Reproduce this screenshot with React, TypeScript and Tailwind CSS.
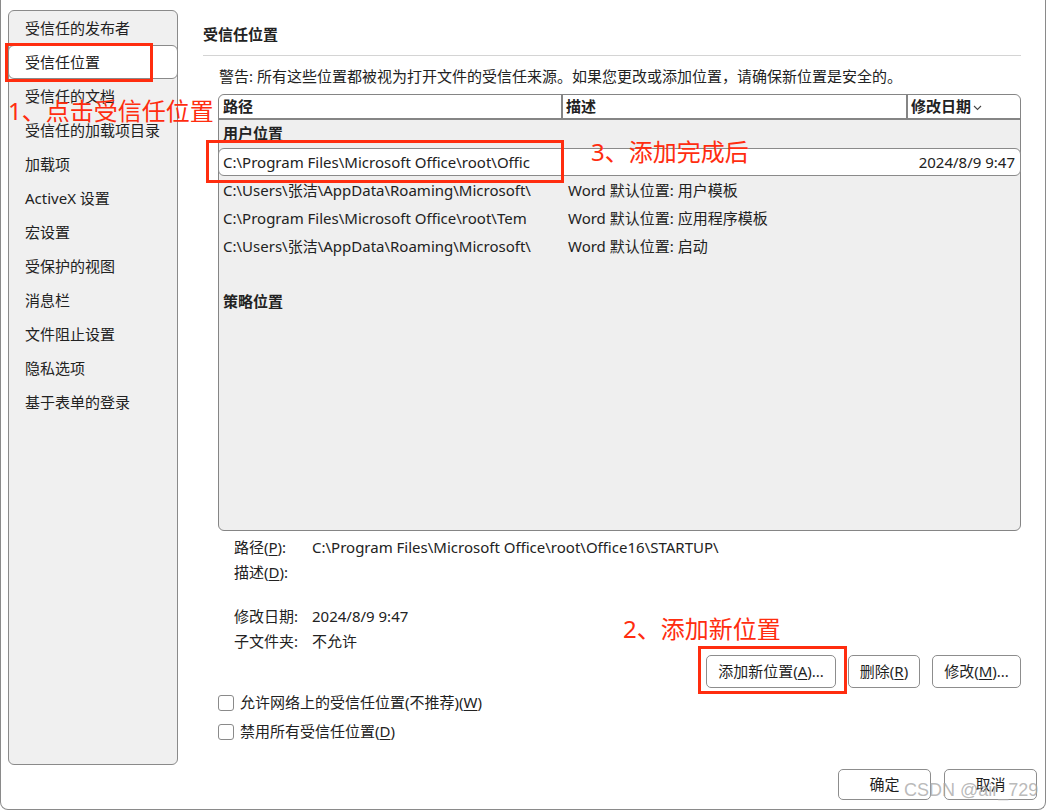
import React from 'react';

const sideItems = [
  '受信任的发布者',
  '受信任位置',
  '受信任的文档',
  '受信任的加载项目录',
  '加载项',
  'ActiveX 设置',
  '宏设置',
  '受保护的视图',
  '消息栏',
  '文件阻止设置',
  '隐私选项',
  '基于表单的登录',
];

const rows = [
  { path: 'C:\\Users\\张洁\\AppData\\Roaming\\Microsoft\\', desc: 'Word 默认位置: 用户模板' },
  { path: 'C:\\Program Files\\Microsoft Office\\root\\Tem', desc: 'Word 默认位置: 应用程序模板' },
  { path: 'C:\\Users\\张洁\\AppData\\Roaming\\Microsoft\\', desc: 'Word 默认位置: 启动' },
];

// accelerator key, underlined like in Windows dialogs
const Key = ({ k }: { k: string }) => <span className="underline underline-offset-2">{k}</span>;

const Button = ({ className, children }: { className: string; children: React.ReactNode }) => (
  <div
    className={`flex items-center justify-center border border-[#8d8d8d] rounded-[5px] bg-white text-[15px] text-[#1f1f1f] ${className}`}
  >
    {children}
  </div>
);

const Checkbox = ({ children }: { children: React.ReactNode }) => (
  <div className="h-[29px] flex items-center">
    <div className="w-[16px] h-[16px] border border-[#8a8a8a] rounded-[3px] bg-white" />
    <span className="ml-[6px]">{children}</span>
  </div>
);

const App: React.FC = () => {
  return (
    <div className="relative w-[1046px] h-[810px] bg-white border-l border-r border-b border-[#8a8a8a] rounded-b-[8px] overflow-hidden text-[15px] text-[#222] font-[Noto_Sans,Noto_Sans_CJK_SC,sans-serif]">
      <div className="flex h-[765px]">
        {/* left nav */}
        <div className="ml-[7px] mt-[10px] w-[170px] h-[755px] bg-[#f0f0f0] border border-[#8a8a8a] rounded-[6px]">
          {sideItems.map((item, i) =>
            i === 1 ? (
              <div
                key={item}
                className="-mx-px h-[34px] flex items-center pl-[16px] bg-white border border-[#8a8a8a] rounded-[6px]"
              >
                {item}
              </div>
            ) : (
              <div key={item} className="h-[34px] flex items-center pl-[16px]">
                {item}
              </div>
            )
          )}
        </div>

        {/* main panel */}
        <div className="ml-[25px] w-[818px] flex flex-col">
          <div className="mt-[24px] h-[20px] leading-[20px] font-bold">受信任位置</div>
          <div className="mt-[11px] border-t border-[#d4d4d4]" />
          <div className="mt-[10px] ml-[16px] h-[20px] leading-[20px] whitespace-nowrap">
            警告: 所有这些位置都被视为打开文件的受信任来源。如果您更改或添加位置，请确保新位置是安全的。
          </div>

          {/* locations table */}
          <div className="mt-[8px] ml-[15px] w-[803px] h-[437px] border border-[#858585] rounded-[6px] bg-[#efefef]">
            <div className="flex h-[25px] bg-white border-b-2 border-[#858585] rounded-t-[6px] font-bold">
              <div className="w-[344px] pl-[4px] flex items-center border-r-2 border-[#858585]">路径</div>
              <div className="w-[345px] pl-[3px] flex items-center border-r-2 border-[#858585]">描述</div>
              <div className="flex-1 pl-[3px] flex items-center">
                修改日期
                <svg width="9" height="6" viewBox="0 0 9 6" className="ml-[2px] mt-[2px]">
                  <path d="M1 1l3.5 3.5L8 1" fill="none" stroke="#444" strokeWidth="1.1" />
                </svg>
              </div>
            </div>

            <div className="h-[26px] flex items-center pl-[4px] font-bold">用户位置</div>
            <div className="-mx-px mt-[2px] h-[28px] flex items-center bg-white border border-[#8a8a8a] rounded-[6px]">
              <div className="w-[345px] pl-[4px] whitespace-nowrap overflow-hidden">
                C:\Program Files\Microsoft Office\root\Offic
              </div>
              <div className="flex-1" />
              <div className="pr-[5px]">2024/8/9 9:47</div>
            </div>
            {rows.map((r, i) => (
              <div key={i} className="h-[28px] flex items-center">
                <div className="w-[345px] pl-[4px] whitespace-nowrap overflow-hidden">{r.path}</div>
                <div className="pl-[4px] whitespace-nowrap">{r.desc}</div>
              </div>
            ))}
            <div className="h-[28px]" />
            <div className="h-[26px] flex items-center pl-[4px] font-bold">策略位置</div>
          </div>

          {/* details of the selected location */}
          <div className="mt-[4px] ml-[31px]">
            <div className="h-[25px] flex items-center">
              <span className="w-[78px]">
                路径(<Key k="P" />):
              </span>
              <span className="whitespace-nowrap">C:\Program Files\Microsoft Office\root\Office16\STARTUP\</span>
            </div>
            <div className="h-[25px] flex items-center">
              <span className="w-[78px]">
                描述(<Key k="D" />):
              </span>
            </div>
            <div className="h-[19px]" />
            <div className="h-[25px] flex items-center">
              <span className="w-[78px]">修改日期:</span>
              <span>2024/8/9 9:47</span>
            </div>
            <div className="h-[25px] flex items-center">
              <span className="w-[78px]">子文件夹:</span>
              <span>不允许</span>
            </div>
          </div>

          <div className="mt-[1px] flex justify-end gap-[12px]">
            <Button className="w-[130px] h-[33px]">
              添加新位置(<Key k="A" />)...
            </Button>
            <Button className="w-[72px] h-[33px]">
              删除(<Key k="R" />)
            </Button>
            <Button className="w-[89px] h-[33px]">
              修改(<Key k="M" />)...
            </Button>
          </div>

          <div className="ml-[15px]">
            <Checkbox>
              允许网络上的受信任位置(不推荐)(<Key k="W" />)
            </Checkbox>
            <Checkbox>
              禁用所有受信任位置(<Key k="D" />)
            </Checkbox>
          </div>
        </div>
      </div>

      {/* dialog buttons */}
      <div className="flex justify-end gap-[13px] pt-[4px] pr-[8px]">
        <Button className="w-[93px] h-[31px]">确定</Button>
        <Button className="w-[93px] h-[31px]">取消</Button>
      </div>

      {/* tutorial annotations */}
      <div className="absolute left-[4px] top-[43px] w-[148px] h-[39px] border-[3px] border-[#ff2d0f]" />
      <div className="absolute left-[205px] top-[140px] w-[358px] h-[43px] border-[3px] border-[#ff2d0f]" />
      <div className="absolute left-[697px] top-[646px] w-[149px] h-[48px] border-[3px] border-[#ff2d0f]" />
      <div className="absolute left-[7px] top-[97px] leading-[28px] text-[24px] text-[#ff2d0f] whitespace-nowrap">
        1、点击受信任位置
      </div>
      <div className="absolute left-[590px] top-[138px] leading-[28px] text-[24px] text-[#ff2d0f] whitespace-nowrap">
        3、添加完成后
      </div>
      <div className="absolute left-[622px] top-[615px] leading-[28px] text-[24px] text-[#ff2d0f] whitespace-nowrap">
        2、添加新位置
      </div>

      {/* watermark */}
      <div className="absolute left-[903px] top-[779px] text-[18px] leading-[22px] text-[#a8a8a8]/80 whitespace-nowrap font-[Liberation_Sans,sans-serif]">
        CSDN @air_729
      </div>
    </div>
  );
};

export default App;
